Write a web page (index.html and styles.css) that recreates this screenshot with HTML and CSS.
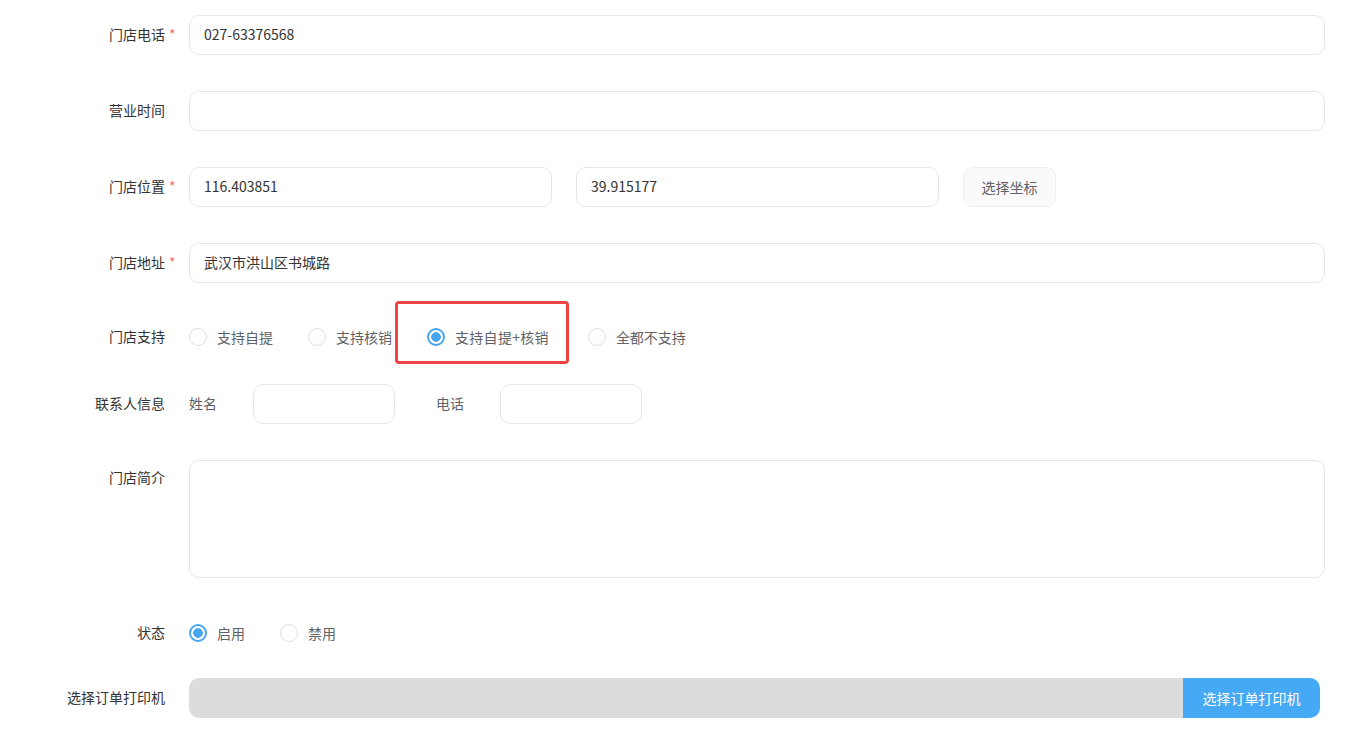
FILE: index.html
```html
<!DOCTYPE html>
<html lang="zh">
<head>
  <meta charset="UTF-8" />
  <meta name="viewport" content="width=device-width, initial-scale=1.0"/>
  <title>门店编辑</title>
  <link rel="stylesheet" href="styles.css">
</head>
<body>

  <form class="form">
    <div class="row gap-36">
      <div class="label"><span class="label-text">门店电话</span><span class="req">*</span></div>
      <input class="input" type="text" value="027-63376568">
    </div>

    <div class="row gap-36">
      <div class="label"><span class="label-text">营业时间</span><span class="req"></span></div>
      <input class="input" type="text" value="">
    </div>

    <div class="row gap-36">
      <div class="label"><span class="label-text">门店位置</span><span class="req">*</span></div>
      <input class="input input-coord" type="text" value="116.403851">
      <input class="input input-coord" type="text" value="39.915177">
      <button class="btn-plain" type="button">选择坐标</button>
    </div>

    <div class="row gap-34">
      <div class="label"><span class="label-text">门店地址</span><span class="req">*</span></div>
      <input class="input" type="text" value="武汉市洪山区书城路">
    </div>

    <!-- 门店支持 -->
    <div class="row row-radio gap-27">
      <div class="label"><span class="label-text">门店支持</span><span class="req"></span></div>
      <div class="radios">
        <span class="radio"><i class="dot"></i>支持自提</span>
        <span class="radio"><i class="dot"></i>支持核销</span>
        <span class="radio checked wide"><i class="dot"></i>支持自提+核销<span class="mark"></span></span>
        <span class="radio"><i class="dot"></i>全都不支持</span>
      </div>
    </div>

    <div class="row gap-36">
      <div class="label"><span class="label-text">联系人信息</span><span class="req"></span></div>
      <span class="sub-label">姓名</span>
      <input class="input input-small" type="text" value="">
      <span class="sub-label sub-label-2">电话</span>
      <input class="input input-small" type="text" value="">
    </div>

    <div class="row row-top gap-35">
      <div class="label"><span class="label-text">门店简介</span><span class="req"></span></div>
      <textarea class="textarea"></textarea>
    </div>

    <div class="row row-radio gap-25">
      <div class="label"><span class="label-text">状态</span><span class="req"></span></div>
      <div class="radios">
        <span class="radio checked"><i class="dot"></i>启用</span>
        <span class="radio"><i class="dot"></i>禁用</span>
      </div>
    </div>

    <div class="row">
      <div class="label"><span class="label-text">选择订单打印机</span><span class="req"></span></div>
      <div class="printer">
        <div class="printer-field"></div>
        <button class="btn-primary" type="button">选择订单打印机</button>
      </div>
    </div>
  </form>

</body>
</html>
```

FILE: styles.css
```css
body {
  margin: 0;
  background: #fff;
  color: #333;
  font-family: "Noto Sans CJK SC", "Liberation Sans", sans-serif;
  font-size: 14px;
}

.form {
  padding: 15px 29px 0 0;
}

.row {
  display: flex;
  align-items: center;
  min-height: 40px;
}

.row-top {
  align-items: flex-start;
}

.gap-36 { margin-bottom: 36px; }
.gap-35 { margin-bottom: 35px; }
.gap-34 { margin-bottom: 34px; }
.gap-27 { margin-bottom: 27px; }
.gap-25 { margin-bottom: 25px; }

.label {
  width: 189px;
  flex-shrink: 0;
  display: flex;
  color: #333;
  line-height: 20px;
  padding-bottom: 3px;
}

.row-top .label {
  padding-top: 7px;
}

.label-text {
  flex: 1;
  text-align: right;
  white-space: nowrap;
}

.req {
  width: 24px;
  padding-left: 4px;
  box-sizing: border-box;
  color: #f56c6c;
}

.input {
  flex: 1;
  height: 40px;
  box-sizing: border-box;
  border: 1px solid #e4e7ed;
  border-radius: 10px;
  padding: 0 14px 2px;
  font-family: inherit;
  font-size: 14px;
  color: #333;
  outline: none;
  background: #fff;
}

.input-coord {
  flex: none;
  width: 363px;
  margin-right: 24px;
}

.btn-plain {
  height: 40px;
  width: 93px;
  border: 1px solid #ebeef5;
  border-radius: 10px;
  background: #fafafa;
  color: #606266;
  font-family: inherit;
  font-size: 14px;
  padding-bottom: 2px;
}

.sub-label {
  color: #606266;
  width: 64px;
  line-height: 20px;
  padding-bottom: 3px;
}

.sub-label-2 {
  margin-left: 41px;
}

.input-small {
  flex: none;
  width: 142px;
  height: 40px;
}

.radios {
  display: flex;
  align-items: center;
}

.radio {
  position: relative;
  display: flex;
  align-items: center;
  line-height: 20px;
  color: #606266;
  margin-right: 35px;
}

.radio.wide {
  margin-right: 39px;
  letter-spacing: 0.3px;
}

.radio .dot {
  width: 18px;
  height: 18px;
  box-sizing: border-box;
  border: 1px solid #dcdfe6;
  border-radius: 50%;
  margin-right: 10px;
  background: #fff;
}

.radio.checked .dot {
  border: 2px solid #46a6f2;
  background: radial-gradient(circle, #46a6f2 0 4.5px, #fff 5px);
}

/* 红色标注框 */
.mark {
  position: absolute;
  left: -32px;
  top: -26px;
  width: 174px;
  height: 63px;
  box-sizing: border-box;
  border: 3px solid #ef4444;
  border-radius: 4px;
}

.textarea {
  flex: 1;
  height: 118px;
  box-sizing: border-box;
  border: 1px solid #e4e7ed;
  border-radius: 10px;
  resize: none;
  outline: none;
  font-family: inherit;
}

.printer {
  flex: 1;
  display: flex;
  height: 40px;
  margin-right: 5px;
}

.printer-field {
  flex: 1;
  background: #dcdcdc;
  border-radius: 10px 0 0 10px;
}

.btn-primary {
  width: 137px;
  border: none;
  border-radius: 0 10px 10px 0;
  background: #46a9f5;
  color: #fff;
  font-family: inherit;
  font-size: 14px;
  padding-bottom: 2px;
}
```
